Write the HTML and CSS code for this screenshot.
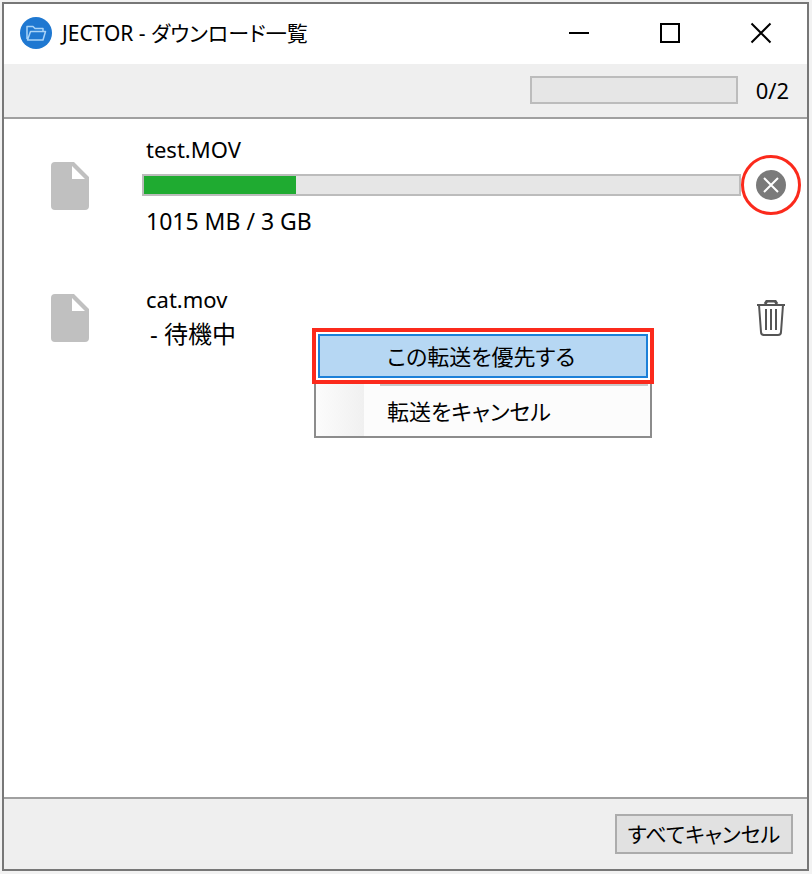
FILE: index.html
```
<!DOCTYPE html>
<html lang="ja">
<head>
    <meta charset="UTF-8">
    <meta name="viewport" content="width=device-width, initial-scale=1.0">
    <title>JECTOR - ダウンロード一覧</title>
    <link rel="stylesheet" href="styles.css">
</head>
<body>
    <div class="window">
        <header class="titlebar">
            <svg class="app-icon" viewBox="0 0 32 32">
                <circle cx="16" cy="16" r="16" fill="#1f78d1"/>
                <path d="M7 22V9.500h6l2 2h8v3M7.500 23l3-8.500h15L23 23z" fill="none" stroke="#a9d3f7" stroke-width="1.500" stroke-linejoin="round"/>
            </svg>
            <h1>JECTOR - ダウンロード一覧</h1>
            <div class="window-buttons">
                <button type="button" aria-label="最小化">
                    <svg viewBox="0 0 22 22"><path d="M1 11h20"/></svg>
                </button>
                <button type="button" aria-label="最大化">
                    <svg viewBox="0 0 22 22"><path d="M2 2h18v18H2z"/></svg>
                </button>
                <button type="button" aria-label="閉じる">
                    <svg viewBox="0 0 22 22"><path d="M1.500 1.500l19 19M20.500 1.500l-19 19"/></svg>
                </button>
            </div>
        </header>

        <div class="summary">
            <progress class="total-bar" value="0" max="2" aria-label="全体の進捗"></progress>
            <span class="count">0/2</span>
        </div>

        <main class="list">
            <div class="item">
                <svg class="file-icon" viewBox="0 0 38 48">
                    <path d="M4 0h19l15 15v29a4 4 0 0 1-4 4H4a4 4 0 0 1-4-4V4a4 4 0 0 1 4-4zM21 4v13h13z" fill="#c0c0c0" fill-rule="evenodd"/>
                </svg>
                <div class="info">
                    <div class="name">test.MOV</div>
                    <progress class="file-bar" value="1015" max="3980" aria-label="test.MOV"></progress>
                    <div class="size">1015 MB / 3 GB</div>
                </div>
                <button type="button" class="action highlighted" aria-label="中止">
                    <svg class="stop-icon" viewBox="0 0 30 30">
                        <circle cx="15" cy="15" r="15" fill="#7a7a7a"/>
                        <path d="M8 8l14 14M22 8L8 22" stroke="#fff" stroke-width="2"/>
                    </svg>
                </button>
            </div>

            <div class="item waiting">
                <svg class="file-icon" viewBox="0 0 38 48">
                    <path d="M4 0h19l15 15v29a4 4 0 0 1-4 4H4a4 4 0 0 1-4-4V4a4 4 0 0 1 4-4zM21 4v13h13z" fill="#c0c0c0" fill-rule="evenodd"/>
                </svg>
                <div class="info">
                    <div class="name">cat.mov</div>
                    <div class="status">- 待機中</div>
                </div>
                <button type="button" class="action" aria-label="削除">
                    <svg class="trash-icon" viewBox="0 0 30 36" fill="none" stroke="#555" stroke-width="2">
                        <path d="M1 5h28M3 5l2 27q0 3 3 3h14q3 0 3-3l2-27M10 9v21M15 9v21M20 9v21"/>
                        <path d="M9 4l2-3h8l2 3" stroke-width="3"/>
                    </svg>
                </button>
                <div class="menu" role="menu">
                    <button type="button" class="menu-item selected" role="menuitem">この転送を優先する</button>
                    <hr>
                    <button type="button" class="menu-item" role="menuitem">転送をキャンセル</button>
                </div>
            </div>
        </main>

        <footer class="footer">
            <button type="button" class="cancel-all">すべてキャンセル</button>
        </footer>
    </div>
</body>
</html>
```

FILE: styles.css
```
* {
    box-sizing: border-box;
    margin: 0;
    padding: 0;
}

body {
    min-height: 100vh;
    padding: 2px 3px 3px 2px;
    display: flex;
    background: #f2f2f2;
    color: #000;
    font-family: "Noto Sans", "Noto Sans CJK JP", sans-serif;
    font-size: 22px;
    line-height: 30px;
    font-feature-settings: "palt";
}

button {
    border: none;
    background: none;
    color: inherit;
    font: inherit;
    font-feature-settings: inherit;
}

svg {
    display: block;
}

.window {
    flex: 1;
    display: flex;
    flex-direction: column;
    border: 2px solid #777;
    background: #fff;
}

.titlebar {
    height: 60px;
    padding: 0 1px 2px 16px;
    display: flex;
    align-items: center;
}

.app-icon {
    width: 32px;
    height: 32px;
}

h1 {
    flex: 1;
    margin-left: 10px;
    font-size: 21px;
    font-weight: normal;
}

.window-buttons {
    display: flex;
}

.window-buttons button {
    width: 91px;
    height: 58px;
    display: flex;
    align-items: center;
    justify-content: center;
}

.window-buttons svg {
    width: 22px;
    height: 22px;
    fill: none;
    stroke: #000;
    stroke-width: 2;
}

.summary {
    height: 55px;
    padding: 0 18px 2px 0;
    display: flex;
    align-items: center;
    justify-content: flex-end;
    gap: 18px;
    background: #efefef;
    border-bottom: 2px solid #a0a0a0;
}

progress {
    display: block;
    appearance: none;
    border: 2px solid #bcbcbc;
    background: #e6e6e6;
}

progress::-webkit-progress-bar {
    background: #e6e6e6;
}

progress::-webkit-progress-value {
    background: #1fab31;
}

.total-bar {
    width: 208px;
    height: 28px;
}

.list {
    flex: 1;
    padding-top: 15px;
}

.item {
    position: relative;
    height: 150px;
    display: flex;
    align-items: flex-start;
}

.file-icon {
    width: 38px;
    height: 48px;
    margin: 28px 53px 0 47px;
}

.info {
    flex: 1;
}

.name,
.size,
.status {
    padding-left: 4px;
}

.file-bar {
    width: 100%;
    height: 22px;
    margin: 10px 0;
}

.size {
    font-size: 23px;
}

.status {
    padding-left: 8px;
    margin-top: 5px;
    font-size: 24px;
}

.action {
    width: 60px;
    height: 60px;
    margin: 21px 6px 0 0;
    display: flex;
    align-items: center;
    justify-content: center;
}

.stop-icon {
    width: 30px;
    height: 30px;
}

.trash-icon {
    width: 30px;
    height: 36px;
}

.highlighted {
    border: 3px solid #fb2a1c;
    border-radius: 50%;
}

.waiting .file-icon {
    margin-top: 10px;
}

.waiting .action {
    margin-top: 4px;
}

.menu {
    position: absolute;
    top: 47px;
    left: 310px;
    width: 338px;
    padding: 1px 2px 0;
    border: 2px solid #8c8c8c;
    background: linear-gradient(to right, #fcfcfc, #f0f0f0 48px, #fcfcfc 48px);
}

.menu-item {
    display: block;
    width: 100%;
    height: 50px;
    padding-left: 69px;
    text-align: left;
}

.selected {
    height: 44px;
    padding-left: 67px;
    border: 2px solid #1b80d8;
    background: #b6d7f3;
    box-shadow: 0 0 0 2px #fff;
    outline: 4px solid #fb2a1c;
    outline-offset: 2px;
}

.menu hr {
    margin: 6px 0 0 62px;
    border: none;
    border-top: 2px solid #c8c8c8;
}

.footer {
    height: 72px;
    padding: 0 14px;
    display: flex;
    align-items: center;
    justify-content: flex-end;
    background: #efefef;
    border-top: 2px solid #a0a0a0;
}

.cancel-all {
    width: 178px;
    height: 40px;
    border: 2px solid #acacac;
    background: #e1e1e1;
    font-size: 21px;
}
```
